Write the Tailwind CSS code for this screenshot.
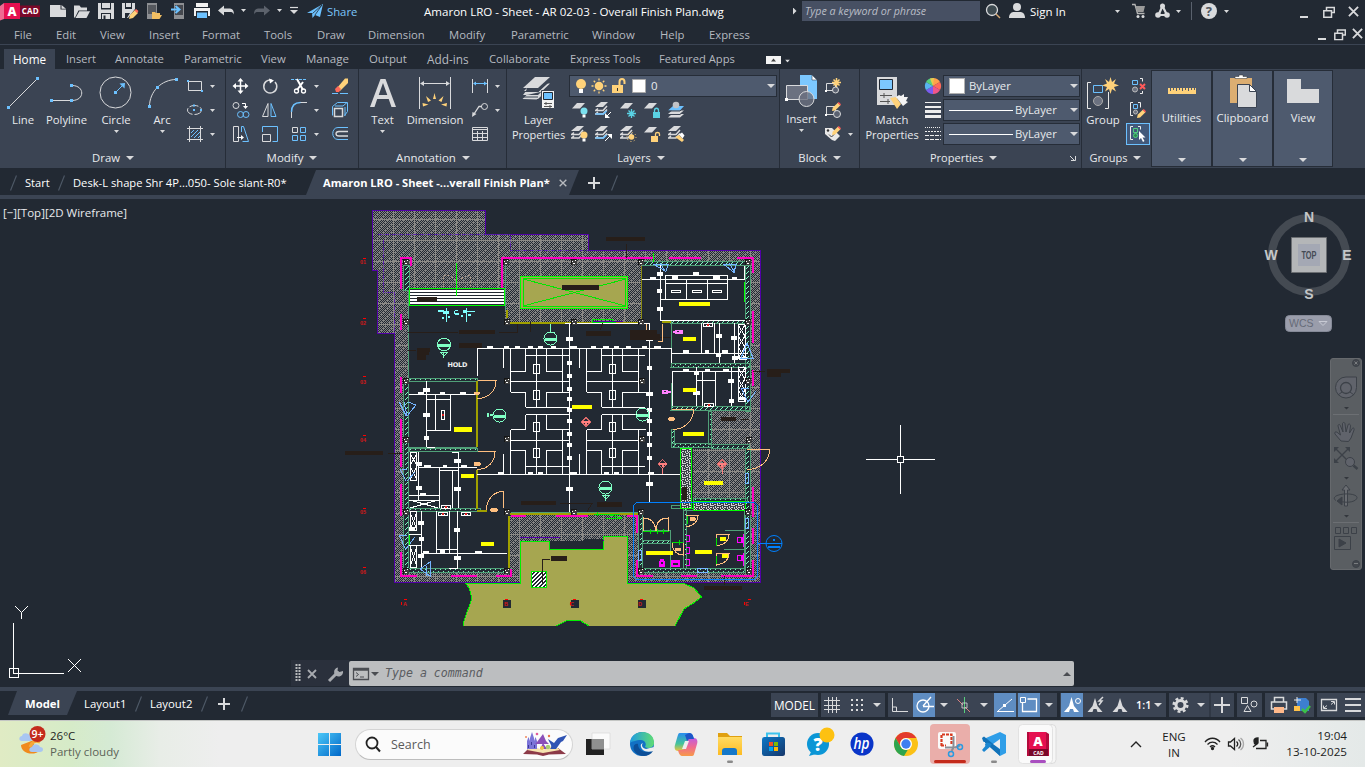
<!DOCTYPE html>
<html lang="en">
<head>
<meta charset="utf-8">
<title>Amaron LRO - Sheet - AR 02-03 - Overall Finish Plan.dwg</title>
<script src="https://cdn.jsdelivr.net/npm/@tailwindcss/browser@4"></script>
</head>
<body class="w-[1365px] h-[767px] overflow-hidden bg-[#222933] font-['Open_Sans','Noto_Sans',sans-serif] text-[11.3px] leading-4 text-[#e8eaed] flex flex-col whitespace-nowrap">

<!-- shared symbols -->
<svg class="absolute w-0 h-0" aria-hidden="true">
  <defs>
    <symbol id="c8" viewBox="0 0 8 4"><path d="M0 0h8L4 4z" fill="#d9dadc"/></symbol>
    <symbol id="c5" viewBox="0 0 5 3"><path d="M0 0h5L2.5 3z" fill="#d9dadc"/></symbol>
    <symbol id="sheet" viewBox="0 0 13 6"><path d="M5 0h8L8 5.500H0z" fill="#d9dadc"/></symbol>
    <symbol id="sheets" viewBox="0 0 16 14"><path d="M6 0h7L8 5H0z" fill="#d9dadc"/><path d="M3 6.500l-2.500 2H8l4-4.500M3 10l-2.500 2H8l4-4.500" fill="none" stroke="#d9dadc" stroke-width="1.500"/></symbol>
    <symbol id="pen" viewBox="0 0 8 8"><path d="M0 8l.6-2.800L5.200.6l2.300 2.300-4.700 4.600z" fill="#ffd27a"/><path d="M5 .8L6 0l2 2-.8 1z" fill="#ff5a5a"/></symbol>
    <symbol id="rest" viewBox="0 0 12 12"><path d="M3.500 4V1.500h7.800v5H9M.8 4.700h7.700v6.500H.8z" fill="none" stroke="#d9dadc" stroke-width="1.500"/></symbol>
    <symbol id="xx" viewBox="0 0 12 12"><path d="M1 1l10 10M11 1L1 11" stroke="#d9dadc" stroke-width="2"/></symbol>
    <symbol id="plus" viewBox="0 0 12 12"><path d="M6 0v12M0 6h12" stroke="#d9dadc" stroke-width="2"/></symbol>
    <symbol id="slash" viewBox="0 0 7 16"><path d="M.5 15.500L6.500.5" stroke="#4e5866" stroke-width="1.200"/></symbol>
  </defs>
</svg>

<!-- title bar -->
<header class="h-[22px] flex items-start shrink-0">
  <div class="w-[424px] flex">
    <svg class="w-[46px] h-[22px]" viewBox="0 0 46 22"><path d="M0 6l4-3v16l-4 1.500z" fill="#ee6a92"/><path d="M4 3h16v16H4z" fill="#e51050"/><path d="M20 5.500h20v11.500H20z" fill="#7a0829"/><text x="7.500" y="15.500" font-family="Open Sans" font-weight="800" font-size="12.500" fill="#fff">A</text><text x="21.800" y="14.300" font-family="Open Sans" font-weight="700" font-size="8" letter-spacing=".2" fill="#fff">CAD</text></svg>
    <svg class="w-6 h-[22px]" viewBox="46 0 24 22"><path d="M50 5h10.500v4.500H66V17H50z" fill="#d9dadc"/><path d="M61.500 5l4.500 3.700h-4.500z" fill="#d9dadc"/></svg>
    <svg class="w-6 h-[22px]" viewBox="70 0 24 22"><path d="M74 17.500V5.500h5.500l1.500 2h6v3h-8.500l-3.500 7z" fill="#d9dadc"/><path d="M79.300 11.300H90L86.500 18H75.500z" fill="#d9dadc"/></svg>
    <svg class="w-6 h-[22px]" viewBox="94 0 24 22"><path d="M98 3h16v16H98z" fill="#d9dadc"/><path d="M101 3h10v6.500h-10zM101 13h10v6h-10z" fill="#222933"/><path d="M102 3h8v5h-8zM102 14h8v5h-8z" fill="#d9dadc"/><path d="M103.500 15.500h2V19h-2z" fill="#222933"/></svg>
    <svg class="w-6 h-[22px]" viewBox="118 0 24 22"><path d="M122 3h13v6l-7 9h-6z" fill="#d9dadc"/><path d="M125 3h7v6h-7zM125 13h5l-3 5h-2z" fill="#222933"/><path d="M126 3h5v4h-5z" fill="#d9dadc"/><path d="M129 19l1-4 5-5 3 3-5 5z" fill="#ffd27a"/><path d="M134.500 10.500l1.500-1.500 2.500 2-1.500 2z" fill="#ff6a5a"/></svg>
    <svg class="w-6 h-[22px]" viewBox="142 0 24 22"><path d="M147 3h10v16h-10z" fill="#8d8f93"/><path d="M148 5h8v9h-8z" fill="#55585e"/><path d="M152 19v-7h3l1 1h4v2h2l-2.500 4z" fill="#f2bf63"/></svg>
    <svg class="w-6 h-[22px]" viewBox="166 0 24 22"><path d="M174 3h10v16h-10z" fill="#8d8f93"/><path d="M175 5h8v10h-8z" fill="#45484f"/><path d="M171 9.500h7M175.500 6l4 3.500-4 3.500" fill="none" stroke="#6cc1ff" stroke-width="2"/></svg>
    <svg class="w-6 h-[22px]" viewBox="190 0 24 22"><path d="M196 3h12v4h-12zM194 8h16v8h-16z" fill="#f2f2f2"/><path d="M196 11h12v8h-12z" fill="#222933"/><path d="M197 12.500h10V18h-10z" fill="#6cc1ff"/></svg>
    <svg class="w-6 h-[22px]" viewBox="214 0 24 22"><path d="M218 10.500l6-5v3h6c2.500 0 4 2 4 6-1-2-2-2.500-4-2.500h-6v3.500z" fill="#d9dadc"/></svg>
    <svg class="w-3 h-[22px]" viewBox="238 0 12 22"><use href="#c5" x="241" y="9" width="5" height="3"/></svg>
    <svg class="w-6 h-[22px]" viewBox="250 0 24 22"><path d="M270 10.500l-6-5v3h-6c-2.500 0-4 2-4 6 1-2 2-2.500 4-2.500h6v3.500z" fill="#5c626c"/></svg>
    <svg class="w-3 h-[22px]" viewBox="274 0 12 22"><use href="#c5" x="277" y="9" width="5" height="3"/></svg>
    <svg class="w-[18px] h-[22px]" viewBox="286 0 18 22"><path d="M290 7.500h8" stroke="#d9dadc" stroke-width="1.200"/><use href="#c8" x="290" y="10" width="8" height="4"/></svg>
    <svg class="w-[23px] h-[22px]" viewBox="304 0 23 22"><path d="M307 13L323 4l-3 13-5-2-2.500 3-.5-5z" fill="#6cc1ff"/><path d="M312.500 13.500L322 5l-7 10" fill="none" stroke="#222933" stroke-width=".8"/></svg>
    <span class="text-[#7cc6fb] text-[11.300px] leading-[23px]">Share</span>
  </div>
  <div class="w-[369px] leading-[24px] text-[11.550px] text-white">Amaron LRO - Sheet - AR 02-03 - Overall Finish Plan.dwg</div>
  <svg class="w-[9px] h-[22px]" viewBox="793 0 9 22"><path d="M792.500 7l4 4-4 4z" fill="#d9dadc"/></svg>
  <div class="w-[178px] h-5 mt-px bg-[#475063] pl-[3px] leading-[21px] text-[10.700px] italic text-[#b9bdc6]">Type a keyword or phrase</div>
  <svg class="w-[50px] h-[22px]" viewBox="980 0 50 22"><circle cx="992" cy="10" r="5.500" fill="#3e4a50" stroke="#d9dadc" stroke-width="1.300"/><path d="M996 14l4 4" stroke="#d6a873" stroke-width="1.500"/><circle cx="1017" cy="7" r="4" fill="#d9dadc"/><path d="M1009 18c0-5 3-6 5-6h6c3 0 5 2 5 6z" fill="#d9dadc"/></svg>
  <span class="w-[80px] leading-[24px] text-[11.500px] text-white">Sign In</span>
  <svg class="w-[180px] h-[22px]" viewBox="1110 0 180 22"><use href="#c5" x="1115" y="10" width="5" height="3"/><path d="M1132 4.500h3l2.500 9h7" fill="none" stroke="#b5b5b5" stroke-width="1.300"/><path d="M1135.500 6h9.500l-1.500 6h-6.500z" fill="#9a9a9a"/><circle cx="1138" cy="16.500" r="1.500" fill="#d9dadc"/><circle cx="1143" cy="16.500" r="1.500" fill="#d9dadc"/><path d="M1162.500 6l-4 9h8.500z" fill="none" stroke="#d9dadc" stroke-width="2.200"/><circle cx="1162.500" cy="6" r="2.500" fill="#d9dadc"/><circle cx="1158" cy="15" r="2.800" fill="#d9dadc"/><circle cx="1167" cy="15" r="2.800" fill="#d9dadc"/><use href="#c5" x="1176" y="10" width="5" height="3"/><path d="M1191.500 2v18" stroke="#59616d"/><circle cx="1209" cy="11" r="8" fill="#d9dadc"/><text x="1205.800" y="16" font-family="Open Sans" font-weight="700" font-size="13" fill="#50565e">?</text><use href="#c5" x="1224" y="10" width="5" height="3"/></svg>
  <svg class="w-[75px] h-[22px]" viewBox="1290 0 75 22"><path d="M1300 17h8" stroke="#d9dadc" stroke-width="2"/><use href="#rest" x="1323" y="6" width="12" height="12"/><use href="#xx" x="1348" y="6" width="11" height="11"/></svg>
</header>

<!-- menu bar -->
<nav class="h-[23px] flex shrink-0 border-b border-[#3b4453] leading-[25px] text-[#b6bac0] pl-[14px]">
  <span class="w-[42px]">File</span><span class="w-[44px]">Edit</span><span class="w-[49px]">View</span><span class="w-[53px]">Insert</span><span class="w-[62px]">Format</span><span class="w-[53px]">Tools</span><span class="w-[51px]">Draw</span><span class="w-[81px]">Dimension</span><span class="w-[62px]">Modify</span><span class="w-[81px]">Parametric</span><span class="w-[68px]">Window</span><span class="w-[49px]">Help</span><span>Express</span>
  <svg class="w-[55px] h-[22px] ml-auto" viewBox="1310 22 55 22"><path d="M1318 39h8" stroke="#d9dadc" stroke-width="2"/><use href="#rest" x="1334" y="28.500" width="12" height="12"/><use href="#xx" x="1352" y="28" width="11" height="11"/></svg>
</nav>

<!-- ribbon tabs -->
<nav class="h-6 flex shrink-0 pt-1 pl-1 leading-5 text-[#b6bac0]">
  <span class="w-[51px] h-5 bg-[#3b4453] text-white text-center text-[11.700px] mr-[11px]">Home</span><span class="w-[49px] text-[11.100px]">Insert</span><span class="w-[69px] text-[11.400px]">Annotate</span><span class="w-[77px]">Parametric</span><span class="w-[45px]">View</span><span class="w-[63px] text-[11.500px]">Manage</span><span class="w-[58px] text-[11.400px]">Output</span><span class="w-[62px] text-[11.800px]">Add-ins</span><span class="w-[81px]">Collaborate</span><span class="w-[89px] text-[11.100px]">Express Tools</span><span class="w-[107px] text-[11.200px]">Featured Apps</span>
  <svg class="w-[26px] h-5" viewBox="766 49 26 20"><path d="M766 56h15v8h-15z" fill="#f4f4f4"/><path d="M771 61.500h5l-2.500-3z" fill="#444"/><use href="#c5" x="785" y="59.500" width="5" height="3"/></svg>
</nav>

<!-- ribbon -->
<section class="h-[99px] flex shrink-0 bg-[#3b4453] pl-px">
  <!-- Draw -->
  <div class="w-[225px] border-r border-[#262d38] flex flex-col">
    <div class="flex h-[79px]">
      <div class="w-11 flex flex-col items-center"><svg class="w-11 h-[43px] shrink-0" viewBox="1 69 44 43"><path d="M8.500 107.500L37.500 78.500" stroke="#d9dadc"/><path d="M7 106h3v3H7zM36 77h3v3h-3z" fill="#6cc1ff"/></svg><span>Line</span></div>
      <div class="w-[43px] flex flex-col items-center"><svg class="w-[43px] h-[43px] shrink-0" viewBox="45 69 43 43"><path d="M52 100.500h20c13 0 13-15 0-15" fill="none" stroke="#d9dadc"/><path d="M50 99h3v3h-3zM70 99h3v3h-3zM70 84h3v3h-3z" fill="#6cc1ff"/></svg><span>Polyline</span></div>
      <div class="w-14 flex flex-col items-center"><svg class="w-14 h-[43px] shrink-0" viewBox="88 69 56 43"><circle cx="115.500" cy="92.500" r="15.500" fill="none" stroke="#d9dadc"/><path d="M115.500 92.500l8-8" stroke="#6cc1ff"/><path d="M114 91h3v3h-3zM119.500 83.500l5.500-.5-.5 5.500z" fill="#6cc1ff"/></svg><span>Circle</span><svg class="w-[5px] h-[3px] mt-[2px]"><use href="#c5"/></svg></div>
      <div class="w-9 flex flex-col items-center"><svg class="w-9 h-[43px] shrink-0" viewBox="144 69 36 43"><path d="M149.500 106.500c0-15 12-27 27-27" fill="none" stroke="#d9dadc"/><path d="M148 105h3v3h-3zM156 86h3v3h-3zM175 78h3v3h-3z" fill="#6cc1ff"/></svg><span>Arc</span><svg class="w-[5px] h-[3px] mt-[2px]"><use href="#c5"/></svg></div>
      <div class="w-11 flex flex-col pt-[5px]">
        <svg class="h-6 w-11" viewBox="180 74 44 24"><path d="M188.500 81.500h13v9h-13z" fill="none" stroke="#d9dadc"/><path d="M187 80h2v2h-2zM201 90h2v2h-2z" fill="#6cc1ff"/><use href="#c5" x="210" y="85" width="5" height="3"/></svg>
        <svg class="h-6 w-11" viewBox="180 98 44 24"><ellipse cx="194.500" cy="110" rx="7" ry="4.500" fill="none" stroke="#d9dadc" stroke-dasharray="9 2"/><path d="M193 109h2v2h-2zM193 104.500h2v2h-2zM200 109h2v2h-2z" fill="#6cc1ff"/><use href="#c5" x="210" y="109" width="5" height="3"/></svg>
        <svg class="h-6 w-11" viewBox="180 122 44 24"><path d="M189.500 126v16M200.500 126v16M187 128.500h16M187 139.500h16" stroke="#d9dadc"/><path d="M191 133l3-3M191 137l7-7M194 138l6-6M198 138l2-2" stroke="#6cc1ff"/><use href="#c5" x="210" y="133" width="5" height="3"/></svg>
      </div>
    </div>
    <div class="flex justify-center items-center gap-[6px] h-5">Draw<svg class="w-2 h-1"><use href="#c8"/></svg></div>
  </div>
  <!-- Modify -->
  <div class="w-[133px] border-r border-[#262d38] flex flex-col">
    <div class="grid grid-cols-[30px_29px_37px_36px] auto-rows-[24px] h-[79px] pt-[5px]">
      <svg viewBox="226 74 30 24"><path d="M240.500 80v12M234 86h13" stroke="#fff" stroke-width="1.500"/><path d="M240.500 78l3 3.500h-6zM240.500 94l3-3.500h-6zM232.500 86l3.500-3v6zM248.500 86l-3.500-3v6z" fill="#fff"/></svg>
      <svg viewBox="256 74 29 24"><path d="M272 80.200a6.500 6.500 0 1 0 3 1.800" fill="none" stroke="#d9dadc" stroke-width="1.500"/><path d="M269 78.500l5 2-4 3z" fill="#fff"/></svg>
      <svg viewBox="285 74 37 24"><path d="M291 79.500h16" stroke="#6cc1ff" stroke-dasharray="3 1"/><path d="M297 79l6 11M303 82l-6 8" stroke="#fff" stroke-width="2"/><circle cx="296.500" cy="91" r="2" fill="none" stroke="#fff" stroke-width="1.300"/><circle cx="303.500" cy="91" r="2" fill="none" stroke="#fff" stroke-width="1.300"/><use href="#c5" x="314" y="85" width="5" height="3"/></svg>
      <svg viewBox="322 74 36 24"><path d="M337 88l8-9.500h3v4.500l-8 8z" fill="#ffd27a"/><path d="M335 89l3-3 3 3-2 3h-3z" fill="#ff6a5a"/><path d="M332 93.500h6M340 93.500h8" stroke="#6cc1ff"/></svg>
      <svg viewBox="226 98 30 24"><circle cx="236" cy="105.500" r="3" fill="none" stroke="#d9dadc"/><path d="M242 103.500h3.500v3" fill="none" stroke="#fff"/><path d="M243 106h5l-2.500 3z" fill="#fff"/><circle cx="240.500" cy="114.500" r="3" fill="none" stroke="#6cc1ff"/><circle cx="246" cy="114.500" r="3" fill="none" stroke="#6cc1ff"/></svg>
      <svg viewBox="256 98 29 24"><path d="M262.500 116.500h5.500v-13z" fill="none" stroke="#d9dadc"/><path d="M276 116.500h-5v-13z" fill="none" stroke="#6cc1ff"/></svg>
      <svg viewBox="285 98 37 24"><path d="M291.500 118v-6M300 102.500h7" stroke="#d9dadc" fill="none"/><path d="M291.500 112c0-6 3-9.500 9-9.500" stroke="#6cc1ff" fill="none" stroke-width="1.500"/><use href="#c5" x="314" y="109" width="5" height="3"/></svg>
      <svg viewBox="322 98 36 24"><path d="M334.500 108.500h8v8h-8z" fill="none" stroke="#d9dadc" stroke-width="1.500"/><path d="M332.500 106.500l5-4h10v9l-3 4M332.500 106.500v9M335 106h8l4-3.500M345 107v9" fill="none" stroke="#6cc1ff"/></svg>
      <svg viewBox="226 122 30 24"><path d="M233.500 126.500h5v15h-5z" fill="none" stroke="#d9dadc"/><path d="M237 137.500h5" stroke="#fff"/><path d="M241 135l3 2.500-3 2.500z" fill="#fff"/><path d="M241.500 132v-5.500h2l5 15h-6" fill="none" stroke="#6cc1ff"/></svg>
      <svg viewBox="256 122 29 24"><path d="M262.500 134.500h8v7h-8z" fill="none" stroke="#d9dadc"/><path d="M262.500 132v-5.500h15v15h-5" fill="none" stroke="#6cc1ff"/></svg>
      <svg viewBox="285 122 37 24"><path d="M292.500 127.500h5v5h-5z" fill="none" stroke="#d9dadc"/><path d="M300.500 127.500h5v5h-5zM292.500 135.500h5v5h-5zM300.500 135.500h5v5h-5z" fill="none" stroke="#6cc1ff"/><use href="#c5" x="314" y="133" width="5" height="3"/></svg>
      <svg viewBox="322 122 36 24"><path d="M348 127.500h-10c-7 0-7 12 0 12h10" fill="none" stroke="#6cc1ff"/><path d="M348 131.500h-9c-4 0-4 4.500 0 4.500h9" fill="none" stroke="#d9dadc" stroke-width="1.300"/></svg>
    </div>
    <div class="flex justify-center items-center gap-[6px] h-5 text-[11.500px]">Modify<svg class="w-2 h-1"><use href="#c8"/></svg></div>
  </div>
  <!-- Annotation -->
  <div class="w-[148px] border-r border-[#262d38] flex flex-col">
    <div class="flex h-[79px]">
      <div class="w-[47px] flex flex-col items-center"><svg class="w-[47px] h-[43px] shrink-0" viewBox="359 69 47 43"><path d="M370 107l10.500-28h5L396 107h-4.500l-2.800-8h-11.500l-2.700 8zM378.700 95h8.600l-4.300-12z" fill="#d9dadc" fill-rule="evenodd"/></svg><span>Text</span><svg class="w-[5px] h-[3px] mt-[2px]"><use href="#c5"/></svg></div>
      <div class="w-[58px] flex flex-col items-center"><svg class="w-[58px] h-[43px] shrink-0" viewBox="406 69 58 43"><path d="M419.500 77v32M450.500 77v32M421 83.500h28" stroke="#d9dadc"/><path d="M420 83.500l4-2.500v5zM450 83.500l-4-2.500v5z" fill="#d9dadc"/><path d="M422.500 103l6 1.500-5.500 2zM426 96l5 4.500-3 1.500zM434.500 93l1.500 6h-3zM443.500 96l-5 4.500 3 1.500zM447 103l-6 1.500 5.500 2z" fill="#ffd27a"/></svg><span>Dimension</span></div>
      <div class="w-[42px] flex flex-col pt-[5px]">
        <svg class="h-6 w-[42px]" viewBox="464 74 42 24"><path d="M472.500 79v14M487.500 79v14" stroke="#d9dadc"/><path d="M474 83.500h13" stroke="#6cc1ff"/><path d="M473 83.500l3-2v4zM487 83.500l-3-2v4z" fill="#6cc1ff"/><use href="#c5" x="495" y="85" width="5" height="3"/></svg>
        <svg class="h-6 w-[42px]" viewBox="464 98 42 24"><path d="M474 114l5-7.500h3" fill="none" stroke="#d9dadc" stroke-width="1.300"/><circle cx="484.500" cy="106.500" r="3" fill="none" stroke="#d9dadc"/><path d="M472 117l.5-5 4 2z" fill="#d9dadc"/><use href="#c5" x="495" y="109" width="5" height="3"/></svg>
        <svg class="h-6 w-[42px]" viewBox="464 122 42 24"><path d="M472.500 127.500h15v13h-15zM472.500 129.500h15M472.500 133.500h15M472.500 137.500h15M477.500 131v9M482.500 131v9" fill="none" stroke="#d9dadc"/></svg>
      </div>
    </div>
    <div class="flex justify-center items-center gap-[6px] h-5 pl-px text-[11.500px]">Annotation<svg class="w-2 h-1"><use href="#c8"/></svg></div>
  </div>
  <!-- Layers -->
  <div class="w-[273px] border-r border-[#262d38] flex flex-col">
    <div class="flex h-[79px]">
      <div class="w-[62px] flex flex-col items-center leading-[15px] pl-px"><svg class="w-[62px] h-[43px] shrink-0" viewBox="507 69 62 43"><path d="M534 77h15l-12 11h-15z" fill="#d9dadc"/><path d="M526 88l-4 4h15l9-8.500h3l-12 11.500h-15l3-4M526 95l-4 4h15l9-8.500M526 94.500l-4.500 4.500 15 .5" fill="#d9dadc"/><path d="M522 91.500h15l12-11M522 97h15" fill="none" stroke="#3b4453" stroke-width="1.200"/><path d="M540.500 90.500h13v18h-13z" fill="#f2f2f2" stroke="#3b4453"/><path d="M542.500 92.500h9v7h-9z" fill="#6cc1ff" stroke="#222933"/><path d="M543 103.500h8M543 106.500h8M545 102v3M549 105v3" stroke="#555"/></svg><span>Layer</span><span class="text-[11px]">Properties</span></div>
      <div class="flex flex-col pt-[6px]">
        <div class="w-[208px] h-[22px] border border-[#262d38] bg-[#4e5a6e] flex items-center">
          <svg class="w-[80px] h-5" viewBox="570 76 80 20"><circle cx="581" cy="84" r="5" fill="#ffd27a"/><path d="M579 89h4v4h-4z" fill="#fff"/><circle cx="599" cy="86" r="4.300" fill="#ffd27a"/><path d="M599 78.500v2M599 91.500v2M591.500 86h2M604.500 86h2M593.700 80.700l1.500 1.500M602.800 89.800l1.500 1.500M604.300 80.700l-1.500 1.500M595.200 89.800l-1.500 1.500" stroke="#ffd27a" stroke-width="1.300"/><path d="M612 85h11v8h-11z" fill="#ffd27a"/><path d="M619.500 85v-3c0-4 5-4 5 0v2" fill="none" stroke="#ffd27a" stroke-width="2"/><path d="M617 88h1v3h-1z" fill="#333"/><path d="M632.500 79.500h13v13h-13z" fill="#fff" stroke="#aaa"/></svg>
          <span class="text-[11.500px] pl-px">0</span><svg class="w-2 h-1 ml-auto mr-px"><use href="#c8"/></svg>
        </div>
        <div class="grid grid-cols-[24px_24px_24px_24px_24px] auto-rows-[24px] pt-px">
          <svg viewBox="570 98 24 24"><use href="#sheet" x="573" y="103" width="13" height="6"/><circle cx="585" cy="111" r="3.500" fill="#7be0ee"/><path d="M583.500 114.500h3v3h-3z" fill="#fff"/></svg>
          <svg viewBox="594 98 24 24"><use href="#sheets" x="596" y="102" width="16" height="14"/><path d="M596.500 114h8l3-3" fill="none" stroke="#6cc1ff" stroke-width="1.500"/><path d="M612 112l-4 4" stroke="#fff"/><path d="M606 118v-5l5 5z" fill="#fff"/></svg>
          <svg viewBox="618 98 24 24"><use href="#sheet" x="621" y="103" width="13" height="6"/><path d="M632.500 109v9M628 113.500h9M629.500 110.500l6 6M635.500 110.500l-6 6" stroke="#5ad2e4" stroke-width="1.300"/></svg>
          <svg viewBox="642 98 24 24"><use href="#sheet" x="645" y="103" width="13" height="6"/><path d="M654 112h7v6h-7z" fill="#5ad2e4"/><path d="M655.500 112v-1.500c0-3 4-3 4 0v1.500" fill="none" stroke="#5ad2e4" stroke-width="1.300"/></svg>
          <svg viewBox="666 98 24 24"><path d="M669 117.500l4-3.500h12l-4 3.500z" fill="#d9dadc"/><path d="M669 114l4-3.500h12l-4 3.500z" fill="#d9dadc"/><path d="M669 110.500l5-4.500h11l-4 4.500z" fill="#6cc1ff"/><path d="M669 114.500h12l4-3.500M669 111h12l4-4" stroke="#3b4453" fill="none"/><circle cx="677" cy="105" r="3.300" fill="#c0c2c6"/></svg>
          <svg viewBox="570 122 24 24"><use href="#sheets" x="572" y="126" width="16" height="14"/><circle cx="585" cy="135" r="3.500" fill="#ffd27a"/><path d="M583.500 138.500h3v3h-3z" fill="#fff"/></svg>
          <svg viewBox="594 122 24 24"><use href="#sheets" x="596" y="126" width="16" height="14"/><path d="M596.500 138h8l3-3" fill="none" stroke="#6cc1ff" stroke-width="1.500"/><path d="M611 136l-5 5" stroke="#fff"/><path d="M613 134v5l-5-5z" fill="#fff"/></svg>
          <svg viewBox="618 122 24 24"><use href="#sheets" x="621" y="126" width="16" height="14"/><circle cx="632.500" cy="137" r="2.800" fill="#ffd27a"/><circle cx="632.500" cy="137" r="4.500" fill="none" stroke="#ffd27a" stroke-dasharray="1 2.500"/></svg>
          <svg viewBox="642 122 24 24"><use href="#sheet" x="645" y="127" width="13" height="6"/><path d="M652 136h7v6h-7z" fill="#ffd27a"/><path d="M656.500 136v-2c0-2 4-2 4 0v2" fill="none" stroke="#ffd27a" stroke-width="1.300"/></svg>
          <svg viewBox="666 122 24 24"><use href="#sheets" x="669" y="126" width="16" height="14"/><path d="M676 137l4-2 5 5-2 2z" fill="#ffd27a"/><path d="M680 134.500l3-2 2.500 3-2 3z" fill="#fff"/></svg>
        </div>
      </div>
    </div>
    <div class="flex justify-center items-center gap-[6px] h-5 pr-1 text-[11px]">Layers<svg class="w-2 h-1"><use href="#c8"/></svg></div>
  </div>
  <!-- Block -->
  <div class="w-[80px] border-r border-[#262d38] flex flex-col">
    <div class="flex h-[79px]">
      <div class="w-[43px] flex flex-col items-center"><svg class="w-[43px] h-[42px] shrink-0" viewBox="780 69 43 42"><path d="M800 75h12l5 5v19h-17z" fill="#7cc8ff"/><path d="M812 75v5h5z" fill="#fff" stroke="#3b4453" stroke-width=".6"/><path d="M786.500 85.500h21v14h-21z" fill="#6b7180" stroke="#d9dadc"/><circle cx="806.500" cy="99" r="7.500" fill="#6b7180" fill-opacity=".8" stroke="#d9dadc"/><path d="M785 98h3v3h-3z" fill="#fff"/></svg><span>Insert</span><svg class="w-[5px] h-[3px] mt-[2px]"><use href="#c5"/></svg></div>
      <div class="w-9 flex flex-col pt-[5px]">
        <svg class="h-6 w-9" viewBox="823 74 36 24"><path d="M826.500 83.500h9v7h-9z" fill="none" stroke="#d9dadc"/><path d="M825 90h2v2h-2z" fill="#fff"/><circle cx="835.500" cy="90" r="3" fill="#5a6170" stroke="#d9dadc"/><path d="M836.500 78v9M832 82.500h9M833.500 79.500l6 6M839.500 79.500l-6 6" stroke="#ffd27a" stroke-width="1.500"/></svg>
        <svg class="h-6 w-9" viewBox="823 98 36 24"><path d="M826.500 106.500h9v8h-9z" fill="none" stroke="#d9dadc"/><path d="M825 114h2v2h-2z" fill="#fff"/><circle cx="837" cy="114" r="3.500" fill="#5a6170" stroke="#d9dadc"/><use href="#pen" x="832" y="102" width="9" height="9"/></svg>
        <svg class="h-6 w-9" viewBox="823 122 36 24"><path d="M825 128h7l8 8-5 5-3-1-7-6z" fill="#e8e8e8"/><circle cx="828" cy="130.500" r="1.200" fill="#333"/><path d="M829 134.500l2.500 2.500 3-3" stroke="#444" fill="none"/><use href="#pen" x="832" y="126" width="9" height="9"/><use href="#c5" x="848" y="133" width="5" height="3"/></svg>
      </div>
    </div>
    <div class="flex justify-center items-center gap-[6px] h-5">Block<svg class="w-2 h-1"><use href="#c8"/></svg></div>
  </div>
  <!-- Properties -->
  <div class="w-[222px] border-r border-[#262d38] flex flex-col">
    <div class="flex h-[79px]">
      <div class="w-[64px] flex flex-col items-center leading-[15px]"><svg class="w-[64px] h-[43px] shrink-0" viewBox="860 69 64 43"><path d="M877 77h20v28h-20z" fill="#d9dadc"/><path d="M879.500 79.500h13v10h-13z" fill="#7cc8ff" stroke="#222933"/><path d="M880 95.500h12M880 101.500h10M884 93v5M888 99v5" stroke="#555"/><path d="M890 98l6-1 5 7-4 5z" fill="#ffd27a"/><path d="M896 97l3-2 2 1 3-2v3l4 0-2 4 2 1-5 4z" fill="#f4f4f4"/></svg><span>Match</span><span class="text-[11px]">Properties</span></div>
      <div class="w-[19px] flex flex-col pt-[5px]">
        <svg class="w-[18px] h-6" viewBox="923 74 18 24"><path d="M932 86V78a8 8 0 0 1 7 4z" fill="#ffa14a"/><path d="M932 86l7-4a8 8 0 0 1 0 8z" fill="#ff6a5a"/><path d="M932 86l7 4a8 8 0 0 1-7 4z" fill="#f0568a"/><path d="M932 86v8a8 8 0 0 1-7-4z" fill="#7a5cf0"/><path d="M932 86l-7 4a8 8 0 0 1 0-8z" fill="#58b4f0"/><path d="M932 86l-7-4a8 8 0 0 1 7-4z" fill="#58cf7d"/><path d="M932 86l-3-7.500a8 8 0 0 1 4-.5z" fill="#e8c94f"/></svg>
        <svg class="w-[18px] h-6" viewBox="923 98 18 24"><path d="M924 102.500h16" stroke="#eee"/><path d="M924 107h16" stroke="#eee" stroke-width="2"/><path d="M924 111.500h16" stroke="#eee" stroke-width="3"/><path d="M924 116.500h16" stroke="#eee" stroke-width="3"/></svg>
        <svg class="w-[18px] h-6" viewBox="923 122 18 24"><path d="M924 127.500h16" stroke="#eee" stroke-dasharray="1 1"/><path d="M924 131.500h16" stroke="#eee" stroke-dasharray="2 1"/><path d="M924 135.500h16M924 139.500h16" stroke="#eee" stroke-dasharray="4 1"/></svg>
      </div>
      <div class="w-[137px] flex flex-col gap-[2px] pt-[6px]">
        <div class="h-[22px] border border-[#262d38] bg-[#4e5a6e] flex items-center pl-[5px]"><i class="w-4 h-4 bg-white border border-[#b0b0b0] mr-1"></i>ByLayer<svg class="w-2 h-1 ml-auto mr-px"><use href="#c8"/></svg></div>
        <div class="h-[22px] border border-[#262d38] bg-[#4e5a6e] flex items-center pl-[5px]"><i class="w-16 h-px bg-white mr-[2px]"></i>ByLayer<svg class="w-2 h-1 ml-auto mr-px"><use href="#c8"/></svg></div>
        <div class="h-[22px] border border-[#262d38] bg-[#4e5a6e] flex items-center pl-[5px]"><i class="w-16 h-px bg-white mr-[2px]"></i>ByLayer<svg class="w-2 h-1 ml-auto mr-px"><use href="#c8"/></svg></div>
      </div>
    </div>
    <div class="flex items-center gap-[6px] h-5 pl-[70px] text-[11px]">Properties<svg class="w-2 h-1"><use href="#c8"/></svg><svg class="w-[6px] h-[6px] ml-auto mr-[5px]" viewBox="0 0 6 6"><path d="M0 1l4 4M5.500 1v4.500H1" fill="none" stroke="#d9dadc"/></svg></div>
  </div>
  <!-- Groups -->
  <div class="w-[69px] flex flex-col">
    <div class="flex h-[79px]">
      <div class="w-[42px] flex flex-col items-center"><svg class="w-[42px] h-[43px] shrink-0" viewBox="1082 69 42 43"><path d="M1091 82.500h-3.500v26h3.500M1105 108.500h3.500V92" fill="none" stroke="#e8e8e8"/><path d="M1093.500 85.500h9v7h-9z" fill="none" stroke="#6cc1ff"/><circle cx="1098" cy="101" r="4.500" fill="#6b7180" stroke="#aaa"/><path d="M1110.500 77l1.500 5 4-3-2 4.500 5 2-5 1.500 2 4.500-4-2.500-1.500 5-1.500-5-4 2.500 2-4.500-5-1.500 5-2-2-4.500 4 3z" fill="#ffd27a"/></svg><span>Group</span></div>
      <div class="w-[27px] flex flex-col pt-[5px] items-center">
        <svg class="h-6 w-6" viewBox="1124 74 24 24"><path d="M1130.500 80.500h5v4h-5z" fill="none" stroke="#6cc1ff"/><circle cx="1133" cy="89.500" r="2.500" fill="#6b7180" stroke="#bbb"/><path d="M1138 78.500h2.500v3M1140.500 91v2.500H1138" fill="none" stroke="#eee"/><path d="M1138 84l5 5M1143 84l-5 5" stroke="#ff5a5a" stroke-width="2"/></svg>
        <svg class="h-6 w-6" viewBox="1124 98 24 24"><path d="M1131 102.500h-2.500v13h2.500M1136 102.500h2.500v5" fill="none" stroke="#eee"/><path d="M1131.500 104.500h4v4h-4z" fill="none" stroke="#6cc1ff"/><circle cx="1133.500" cy="112" r="2" fill="#6b7180" stroke="#bbb"/><use href="#pen" x="1135" y="109" width="9" height="9"/></svg>
        <svg class="h-[22px] w-6 mt-px border border-[#6cc1ff] bg-[#42597a]" viewBox="1125 124 22 20"><path d="M1131 126.500h-2.500v13h2.500M1136 126.500h2.500v3" fill="none" stroke="#eee"/><path d="M1131.500 128.500h4v4h-4z" fill="none" stroke="#50d080"/><circle cx="1133.500" cy="135.500" r="2" fill="#2b8a50" stroke="#50d080"/><path d="M1137 131v9l2-2 2 4 1.500-1-2-3.500h3z" fill="#fff"/></svg>
      </div>
    </div>
    <div class="flex justify-center items-center gap-[6px] h-5 pr-[2px] text-[11px]">Groups<svg class="w-2 h-1"><use href="#c8"/></svg></div>
  </div>
  <div class="flex pt-px">
    <div class="w-[61px] h-[97px] border border-[#262d38] bg-[#4e5a6e] flex flex-col items-center"><svg class="w-[58px] h-[39px] shrink-0" viewBox="1152 71 58 39"><path d="M1167 88h28v6h-28z" fill="#ffd27a"/><path d="M1169.500 88v3M1172.500 88v2M1175.500 88v3M1178.500 88v2M1181.500 88v3M1184.500 88v2M1187.500 88v3M1190.500 88v2M1193.500 88v2" stroke="#4e5a6e"/></svg><span>Utilities</span><svg class="w-2 h-1 mt-auto mb-[4px]"><use href="#c8"/></svg></div>
    <div class="w-[61px] h-[97px] border border-[#262d38] bg-[#4e5a6e] flex flex-col items-center"><svg class="w-[58px] h-[39px] shrink-0" viewBox="1213 71 58 39"><path d="M1229 78h22v25h-22z" fill="#dcae72"/><path d="M1234 78.500h12v-2h-4v-1.500h-4v1.500h-4z" fill="#fff" stroke="#333" stroke-width=".5"/><path d="M1236.500 84.500h12l7 7v16h-19z" fill="#d9dadc" stroke="#3b4453"/><path d="M1248.500 84.500v7h7z" fill="#fff" stroke="#3b4453"/></svg><span class="text-[11.500px]">Clipboard</span><svg class="w-2 h-1 mt-auto mb-[4px]"><use href="#c8"/></svg></div>
    <div class="w-[60px] h-[97px] border border-[#262d38] bg-[#4e5a6e] flex flex-col items-center"><svg class="w-[58px] h-[39px] shrink-0" viewBox="1274 71 58 39"><path d="M1287 79h14v10h18v14h-32z" fill="#d9dadc"/></svg><span>View</span><svg class="w-2 h-1 mt-auto mb-[4px]"><use href="#c8"/></svg></div>
  </div>
</section>

<!-- document tabs -->
<nav class="h-[27px] flex shrink-0 items-center pl-[10px] pt-[2px] text-white">
  <svg class="w-[7px] h-4 mr-2"><use href="#slash"/></svg><span class="w-[33px] text-[11.100px]">Start</span>
  <svg class="w-[7px] h-4 mr-2"><use href="#slash"/></svg><span class="w-[233px] text-[11.200px]">Desk-L shape Shr 4P...050- Sole slant-R0*</span>
  <div class="w-[273px] h-[25px] bg-[#3b4453] [clip-path:polygon(10px_0,100%_0,263px_100%,0_100%)] flex items-center pl-[17px] font-bold text-[11.100px]"><span class="w-[236px]">Amaron LRO - Sheet -...verall Finish Plan*</span><svg class="w-2 h-2 opacity-80"><use href="#xx" width="8" height="8"/></svg></div>
  <svg class="w-3 h-3 ml-[9px] mr-[11px]"><use href="#plus"/></svg><svg class="w-[7px] h-4"><use href="#slash"/></svg>
</nav>
<div class="h-1 bg-[#3b4453] shrink-0"></div>

<!-- model space -->
<main class="relative h-[488px] shrink-0">
<svg class="block w-[1365px] h-[488px]" viewBox="0 199 1365 488" fill="none" shape-rendering="crispEdges">
  <defs>
    <pattern id="dots" width="8" height="8" patternUnits="userSpaceOnUse"><path d="M0 0h8v8H0z" fill="#222933"/><path d="M0 0h1v1H0zM2 0h1v1H2zM4 0h1v1H4zM6 0h2v1H6zM1 1h1v1H1zM3 1h1v1H3zM5 1h1v1H5zM7 1h1v1H7zM0 2h1v1H0zM2 2h1v1H2zM4 2h2v1H4zM6 2h1v1H6zM1 3h1v1H1zM3 3h1v1H3zM5 3h1v1H5zM7 3h1v1H7zM0 4h1v1H0zM2 4h2v1H2zM4 4h1v1H4zM6 4h1v1H6zM1 5h1v1H1zM3 5h1v1H3zM5 5h1v1H5zM7 5h1v1H7zM0 6h2v1H0zM2 6h1v1H2zM4 6h1v1H4zM6 6h1v1H6zM1 7h1v1H1zM3 7h1v1H3zM5 7h1v1H5zM7 7h1v1H7z" fill="#838383"/></pattern>
    <pattern id="tiles" width="21" height="21" patternUnits="userSpaceOnUse" x="393" y="219"><path d="M0 .5h21M.5 0v21" stroke="#8c8a86"/></pattern>
    <pattern id="wall" width="5" height="5" patternUnits="userSpaceOnUse"><path d="M0 0h5v5H0z" fill="#222933"/><path d="M0 4h1v1H0zM1 3h1v1H1zM2 2h1v1H2zM3 1h1v1H3z" fill="#7fffc4"/></pattern>
    <pattern id="stone" width="7" height="7" patternUnits="userSpaceOnUse"><path d="M0 0h2v1H0zM3 0h1v2H3zM5 1h2v1H5zM1 2h1v2H1zM3 3h2v1H3zM6 3h1v2H6zM0 5h2v1H0zM3 5h1v2H3zM5 6h1v1H5zM2 4h1v1H2zM4 1h1v1H4z" fill="#d4d4d4"/></pattern>
    <pattern id="diag" width="4" height="4" patternUnits="userSpaceOnUse"><path d="M0 0h4v4H0z" fill="#222933"/><path d="M0 3h1v1H0zM1 2h1v1H1zM2 1h1v1H2zM3 0h1v1H3zM1 3h1v1H1zM2 2h1v1H2zM3 1h1v1H3zM0 0h1v1H0z" fill="#fff"/></pattern>
    <g id="col"><path d="M-3-3h6v6h-6z" fill="#3c3c3c"/><path d="M-3-3h6v1h-6zM-3-3h1v6h-1z" fill="#151515"/><path d="M-2-1h1v1h-1zM1-2h1v1H1zM-1 1h2v1h-2z" fill="#fff"/></g>
    <g id="desk" stroke="#fff"><path d="M510.500 348v44M503.500 348v20M525.500 348v23.500h-15M510.500 381.500H569M525.500 407v-14.500h-15M525.500 355.500H569M525.500 407.500H569M546.500 348v23.500h16M546.500 407v-14.500h23M562.500 348v44M536.500 348v59M530 381.500h13"/><path d="M533.500 364.500h6v9h-6zM533.500 390.500h6v9h-6z"/></g>
    <g id="seat"><path d="M.5.5h9v3h-9zM3 2.500h4" stroke="#fff"/><path d="M4 1h2v2H4z" fill="#e02020"/></g>
    <g id="tag"><circle r="6.500" stroke="#7fffc4"/><path d="M-6-1h12v3h-12z" fill="#7fffc4"/></g>
    <g id="sym"><path d="M0-4.500l4.500 4.500L0 4.500-4.500 0z" stroke="#d96a6a"/><path d="M-4-1h8v2h-8zM-1-1h2v4h-2z" fill="#ff7f7f"/></g>
    <path id="paving" d="M372.500 210.500H485.500V234.500H588.500V250.500H760.500V582.500H394.500V333.500H377.500V270.500H372.500Z"/>
    <path id="court" d="M711 411H749V447H711zM693 449H747V500H693z"/>
  </defs>

  <!-- site paving -->
  <use href="#paving" fill="url(#dots)"/><use href="#paving" fill="url(#tiles)" stroke="#5200a8"/>
  <path d="M378 234.500H510v16h78M383 240v52h11v41" stroke="#5b24ac" stroke-dasharray="4 1 1 1"/>
  <!-- building floor -->
  <path d="M409 288H505V322H642V264H749V571H640V513H510V571H409Z" fill="#222933"/>
  <use href="#court" fill="url(#dots)"/><use href="#court" fill="url(#tiles)"/>

  <!-- lawn -->
  <path d="M520.500 541.500H549.500V549.500H603.500V536.500H627.500V583H684L694 588 701.500 597 695 602 684 609 675 626H589L580 620H567L556 626H463L464 621 472 598 469 588 466 583H520.500Z" fill="#a6a650"/>
  <path d="M675 626L684 609 695 602 701.500 597 694 588 684 583.500H627.500V536.500H603.500V549.500H549.500V541.500H520.500V583.500H466L469 588 472 598 464 621 463 626M556 626L567 620.500H580L589 626" stroke="#00f000"/>
  <path d="M520 537h40M584 540h20" stroke="#5200a8"/><path d="M550 541h34v-2h19v10h-53z" fill="#222933"/>
  <path d="M531.500 571.500h15v16h-15z" fill="url(#diag)" stroke="#00f000"/><path d="M550 559.500h-7.500V583" stroke="#271e19"/>

  <!-- planter -->
  <path d="M520.500 276.500H627.500V308.500H520.500Z" fill="#a6a650" stroke="#00ff00"/><path d="M523.500 278.500H625.500V306.500H523.500ZM523 279L626 306M626 279L523 306" stroke="#00e800"/>

  <!-- hatched walls -->
  <g fill="url(#wall)" stroke="#50a078">
    <path d="M403.500 265.500H409V290H403.500zM403.500 382.500h5V571h-5zM403.500 568.500H511v4H403.500zM642.500 261.500H749v4H642.500zM745.500 265.500h5V411h-5zM409 378.500h68v3h-68zM409 448.500h68v3h-68zM409 508.500h71v2.500h-71zM671.500 320.500H749v3h-78zM671.500 363.500H749v4h-78zM671.500 406.500H749v4h-78zM671.500 429.500h3v18h-3zM671.500 443.500h40v4h-40zM708.500 411.500h3v33h-3zM711 444.500h38v4h-38zM745.500 448.500h5V571h-5zM693 498.500h54v3h-54zM638.500 513.500h4V571h-4zM638.500 568.500H749v4H638.500zM683.500 508.500h3V568h-3zM642.500 540.500h28v3h-28z"/>
  </g>
  <path d="M408.500 290V571M505.500 265V310M409 447.500h68M409 568.500h98M671.500 323V363M671.500 383V406M744.500 511V571M511 512.500h128M684 510.500h61M690 508h54M724.500 530.500h20v38M724 549.500h20M670.500 530v38M642.500 530.500h28M671 508.500h13v-3h-13z" stroke="#50a078"/>
  <path d="M510 322.500H641M510 514H638" stroke="#a0a000" stroke-width="2"/>
  <path d="M477 381v66M477 470v39M477 510.500h10M507 310V318M509 516V569M662 322h9" stroke="#a0a000" stroke-width="2"/><path d="M641.500 266V320" stroke="#8a8a10"/>

  <!-- magenta boundary -->
  <path d="M401 289V258H411V266M401 314V330M401 377V393M401 419V467M401 484V516M401 552V576H417M451 576H477M496 576H511V569M502 288V258H653M669 258H701M737 258H753V273M753 311V343M753 370V386M753 487V517M753 528V544M753 560V576H721M697 576H681M653 576H637V560M637 533V516H627M588 516H556M526 516H511" stroke="#ff00c0" stroke-width="2"/>

  <!-- stairs -->
  <path d="M409.500 288.500H504.500V305.500H409.500Z" fill="#222933" stroke="#00ff00"/><path d="M410 291h94M410 294h94M410 297h94M410 300h94M410 303h94" stroke="#fff" stroke-width="2"/>
  <path d="M456.500 263V296" stroke="#00ff00"/><path d="M443.500 287v-12h4l10 6 10-6h3v12" stroke="#a89484" stroke-dasharray="2 2"/>

  <!-- stone strips -->
  <path d="M680.500 448.500H692V508H680.500zM693.500 501.500H746V510H693.500z" fill="#3a3f46"/><path d="M680.500 448.500H691.500V508H680.500zM693.500 501.500H745.500V510H693.500z" fill="url(#stone)" stroke="#00ff00"/>

  <!-- workstations -->
  <path d="M477.500 376V348.500H671.500V363M569.500 323V512M649.500 323V502M477 474.500H680M565 323.500h84" stroke="#fff"/>
  <use href="#desk"/><use href="#desk" transform="translate(76 0)"/>
  <g transform="translate(0 822) scale(1 -1)"><use href="#desk"/><use href="#desk" transform="translate(76 0)"/></g>

  <!-- furniture, left rooms -->
  <g stroke="#fff">
    <path d="M409 394.500h68M426.500 381v66M435.500 394v36M450.500 394v36.500H427M427 399.500h24M427 447.500h8M441.500 410.500h3v9h-3z"/>
    <path d="M418 467.500h59M418.500 452v48M439.500 468v40M452.500 470v38M458.500 452v56M439 470.500h19M409 495.500h30v12M409 500.500h30M410 500l28 8M438 500l-28 8M452 452.500h6"/>
    <path d="M421.500 511v57M409 534.500h12M409 545.500h12M436.500 511v42M449.500 511v42M457.500 511v57M436 549.500h22M421 553.500h86M449 568.500h9"/>
    <path d="M410.500 452.500h6v28h-6zM410 453l7 13-7 14M417 453l-7 13 7 14M410.500 511.500h6v19h-6zM410 512l7 18M417 512l-7 18M410.500 545.500h6v22h-6zM410 546l7 21M417 546l-7 21"/>
  </g>
  <use href="#seat" x="441" y="505"/><use href="#seat" x="438" y="512"/><use href="#seat" x="461" y="512"/><path d="M442 414h2v2h-2z" fill="#e02020"/>

  <!-- furniture, right rooms -->
  <g stroke="#fff">
    <path d="M642 279.500h102v-14M660.500 265v55.500H745M665.500 275.500h62v24h-67M665.500 275v24M686.500 279v20M707.500 279v20M665 283.500h62M671.500 290.500h9v2h-9zM692.500 290.500h9v2h-9zM712.500 290.500h9v2h-9z"/>
    <path d="M701.500 323v30M714.500 323v30M719.500 323v40M672 353.500h76M734.500 323v40"/>
    <path d="M672.500 406v-34.500H745M696.500 367v39M702.500 371v35M715.500 371v35M697 380.500h18M731.500 367v39M650 502h-12"/>
    <path d="M738.500 324.500h7v34h-7zM738 325l7 11-7 11 7 11M745 325l-7 11 7 11-7 11M738.500 367.500h7v34h-7zM738 368l7 11-7 11 7 11M745 368l-7 11 7 11-7 11"/>
  </g>
  <use href="#seat" x="703" y="323"/><use href="#seat" x="704" y="403"/>

  <!-- dimension ticks -->
  <path d="M487 347.500h6M504 347.500h5M515 347.500h5M528 347.500h5M538 347.500h5M551 347.500h5M570 347.500h7M591 347.500h5M603 347.500h6M614 347.500h5M626 347.500h5M642 347.500h5M654 347.500h7M498 473.500h6M528 473.500h5M538 473.500h5M570 473.500h7M604 473.500h5M614 473.500h5M648 473.500h6M418 393.500h6M440 393.500h5M460 393.500h6M424 466.500h7M443 466.500h4M461 466.500h6M420 494.500h6M423 552.500h6M440 551.500h5M475 552.500h7M650 278.500h6M672 277.500h6M713 277.500h7M732 278.500h5M683 351.500h6M705 351.500h4M722 351.500h6M739 358.500h8M683 370.500h6M705 370.500h5M723 370.500h6M739 398.500h7" stroke="#fff" stroke-width="3"/>
  <path d="M566 339h7M567 363h5M567 376h5M567 389h5M567 399h5M567 410h5M567 421h5M567 434h5M567 445h5M567 458h5M566 489h7M646 339h7M647 368h5M646 394h7M647 410h5M647 421h5M647 434h5M647 445h5M647 458h5M646 484h7M423 390h7M423 415h7M424 438h5M417 464h5M454 461h7M416 488h6M454 489h7M418 523h6M419 539h5M418 556h6M409 529h6M454 530h6M454 558h7M657 274h6M693 274h6M657 291h5M657 309h6M716 336h6M731 338h6M716 355h5M732 358h6M694 373h5M728 381h6M693 393h7M729 401h5" stroke="#fff" stroke-width="4"/>

  <!-- room names -->
  <g fill="#ffff00"><path d="M454 427h18v5h-18zM461 474h13v4h-13zM481 542h13v4h-13zM572 405h20v4h-20zM679 302h31v4h-31zM683 337h13v4h-13zM683 388h13v4h-13zM683 432h21v4h-21zM704 481h19v4h-19zM646 551h27v4h-27zM695 550h17v4h-17zM720 537h6v4h-6zM722 554h6v4h-6z"/></g>
  <!-- annotations -->
  <g fill="#271e19"><path d="M606 237h39v4h-39zM417 297h20v5h-20zM459 330h36v4h-36zM459 343h23v5h-23zM417 348h13v4h-1v3h-3v5h-9zM767 369h23v4h-9v4h-14zM345 451h38v4h-38zM562 285h37v5h-37zM586 331h25v5h-25zM630 330h27v4h3v6h-30zM521 501h35v4h-35zM597 502h25v5h-25zM551 556h16v5h-16zM721 417h15v4h-15zM704 586h38v4h-38zM682 487h5v13h-5z"/></g>
  <path d="M408 332.500h50M499 332.500h18v-9M530.500 322v10M408 350.500h8M626.500 244v14M753 371.500h12M388 453.500h14M560 503.500h32l-5 8M724.500 576v9M741 419.500h8M650 337.500h21M600 330l4-9" stroke="#271e19"/>

  <!-- doors -->
  <g stroke="#ffbf80"><path d="M478 380.500h18c0 10-7 18-19 18M478 451.500h17c0 10-7 18-18 18M503.500 508V491.500c-10 0-17 8-17 18M671.500 409.500h22c0 11-9 20-21 20M747 449.500h22.500c0 11-9 20-22.500 20M662.500 324v17h-5M646 324v6M643.500 517v15M668.500 517v15M643 518c7 0 12 4 13 13M668 518c-7 0-12 4-12 13M686 515.500h12c0 6-5 11-12 11M716.500 534v12M716 534.500h13c0 6-5 11-13 11M716.500 554v12M716 553.500h13c0 6-5 11-13 11M683 543v12c-6 0-11-5-11-12"/></g>
  <g fill="#ffbf80"><path d="M474 462h6v1h1v2h-1v1h-6zM474 392h6v2h-1v1h-4zM491 508h6v1h1v2h-1v1h-6v-1h-1v-2h1zM669 417h5v1h1v2h-1v1h-5v-1h-1v-2h1zM690 517h5v1h1v2h-1v1h-5zM675 548h6v3h-6z"/></g>

  <!-- tags -->
  <use href="#tag" x="444" y="344.500"/><path d="M443.500 352v6M440 352h8l-4 4z" stroke="#7fffc4"/>
  <use href="#tag" x="550.500" y="338.500"/><path d="M550.500 324v8M547 332h8" stroke="#7fffc4"/>
  <use href="#tag" x="499.500" y="415.500"/><path d="M487.500 413v4M490 415h3" stroke="#7fffc4" stroke-width="2"/>
  <use href="#tag" x="642.500" y="414.500"/><use href="#tag" x="605.500" y="487.500"/><path d="M605.500 494v7M602 495h8l-4 4z" stroke="#7fffc4"/>
  <use href="#sym" x="586" y="422"/><use href="#sym" x="662.500" y="464"/><use href="#sym" x="722" y="464"/><path d="M662.500 468v6M722.500 468v6" stroke="#ff7f7f"/>
  <g fill="#7fffff"><path d="M438 310h6v2h-6zM446 308h1v14h-1zM443 311h3v3h-3zM447 311h2v3h-2zM442 317h2v2h-2zM448 316h2v2h-2zM466 308h1v14h-1zM463 310h3v3h-3zM467 311h8v1h-8zM461 315h2v2h-2zM468 314h3v2h-3zM455 310h3v1h-3zM454 311h1v3h-1zM455 313h4v2h-4z"/></g>
  <g fill="#ff80ff"><path d="M675 330h8v4h-8zM673 331h2v2h-2zM662 390h6v4h-6zM668 391h3v2h-3z"/></g><path d="M677 331.500h2M664 391.500h2" stroke="#222933"/>

  <!-- windows -->
  <g stroke="#74b4ff"><path d="M399.500 402.500l7 14M416 405l-9 11M404 402l3 14M416 405l-8-3M400 469l6 12M415 472l-8 9M402 469h5M399.500 535.500l6 14M415 537l-9 12M400 535h7M420 569l10-7v14zM426 566v10M654 264.500h14l-2 7zM724 264.500h12l-2 8zM741 358l6-15 6 15zM741 388l7 14 8-11M742 388h7M745.500 473.500h3v10h-3zM745.500 518.500h3v10h-3zM638.500 550.500h3v10h-3zM697.500 568.500h10v4h-10zM660 263l5 8M729 263l5 8"/></g>
  <path d="M409.500 535v10M653.500 253v9M744.500 282v20" stroke="#00ff00"/><path d="M592 319.500h20l3 3H592zM594 514.500h26M606 518.500h16M610 515l12 3M597 512v4" stroke="#00e800"/><path d="M593 321.500h30" stroke="#5200a8"/>

  <!-- washrooms -->
  <g stroke="#00e000"><path d="M643 531.500h26M650.500 529v5M657.500 529v5M663.500 529v5M672 542.500h11M679.500 540v5M716.500 538v8M716.500 556v8M687.500 516v8"/></g>
  <g stroke="#ff00ff"><path d="M686 535h3v6h-3M686 547h3v6h-3M686 559h3v6h-3M743.500 534v13M743.500 553v13"/><circle cx="740" cy="540" r="3"/><circle cx="740" cy="558" r="3"/></g>
  <g fill="#ff00ff"><path d="M660 559h4v2h1v6h-6v-6h1zM671 560h9v7h-9zM741 538h2v4h-2zM741 556h2v4h-2z"/></g><path d="M661 562h2v2h-2zM673 563h5v2h-5z" fill="#222933"/>

  <!-- revision bubble -->
  <path d="M638 502.500H752a5 5 0 0 1 5.500 5V574a5 5 0 0 1-5.500 5.500H639a5 5 0 0 1-5.500-5.500V507.500a5 5 0 0 1 4.500-5M757 543.500h25" stroke="#0080ff"/><circle cx="774" cy="543.500" r="8" stroke="#0080ff" shape-rendering="auto"/><path d="M768 546h12v2h-12zM773 539h2v2h-2z" fill="#0080ff"/>

  <!-- columns -->
  <use href="#col" x="406" y="262"/><use href="#col" x="506" y="262"/><use href="#col" x="574" y="262"/><use href="#col" x="641" y="262"/><use href="#col" x="748" y="262"/>
  <use href="#col" x="406" y="322"/><use href="#col" x="507" y="322"/><use href="#col" x="574" y="322"/><use href="#col" x="641" y="322"/><use href="#col" x="748" y="322"/>
  <use href="#col" x="406" y="381"/><use href="#col" x="507" y="381"/><use href="#col" x="642" y="381"/><use href="#col" x="748" y="381"/>
  <use href="#col" x="406" y="440"/><use href="#col" x="507" y="439"/><use href="#col" x="642" y="439"/><use href="#col" x="749" y="440"/>
  <use href="#col" x="406" y="512"/><use href="#col" x="507" y="512"/><use href="#col" x="574" y="512"/><use href="#col" x="641" y="512"/><use href="#col" x="748" y="512"/>
  <use href="#col" x="406" y="571"/><use href="#col" x="507" y="571"/><use href="#col" x="641" y="571"/><use href="#col" x="749" y="571"/>
  <path d="M503 600h8v8h-8zM571 600h8v8h-8zM638 600h8v8h-8z" fill="#222933"/>

  <!-- grid references -->
  <g fill="#d01818" font-family="Liberation Sans" font-weight="700" font-size="5.500">
    <text x="360" y="264">01</text><text x="360" y="325">02</text><text x="360" y="384">03</text><text x="360" y="442">04</text><text x="360" y="514">05</text><text x="360" y="574">06</text>
    <text x="403" y="606">A</text><text x="504" y="606">B</text><text x="570" y="606">C</text><text x="638" y="606">D</text><text x="745" y="606">E</text>
  </g>
  <path d="M363 258.500h3M363 318.500h3M363 376.500h3M363 435.500h3M363 508.500h3M363 567.500h3M404 599.500h3M505 599.500h3M573 599.500h3M640 599.500h3M748 599.500h3M401.500 602v3M744.500 602v3M570.500 602v3" stroke="#ff0000"/>
  <text x="447.500" y="367" font-family="DejaVu Sans" font-weight="700" font-size="6.500" textLength="20" fill="#f0f0f0">HOLD</text>

  <!-- crosshair and UCS icon -->
  <path d="M866 459.500h31M904 459.500h31M900.500 425v31M900.500 463v31M897.500 456.500h6v6h-6z" stroke="#fff"/>
  <path d="M13.500 623v50.500H64M9.500 668.500h9v9h-9z" stroke="#fff"/><path d="M15 606l6.500 6.500L28 606M21.500 612.500V619M68 659l13 13M81 659l-13 13" stroke="#fff" shape-rendering="auto"/>
</svg>

<span class="absolute left-[3px] top-[6px] text-[11.500px]">[−][Top][2D Wireframe]</span>

<!-- view cube -->
<svg class="absolute left-[1260px] top-[6px] w-[100px] h-[130px]" viewBox="1260 205 100 130" font-family="Liberation Sans">
  <circle cx="1309" cy="255" r="37" fill="none" stroke="#444a52" stroke-width="8"/>
  <path d="M1291.500 237.500h35v35h-35z" fill="#b4b6b8" stroke="#6b6e72"/><path d="M1298 244h22v22h-22z" fill="#a4a8b4"/>
  <text x="1301.500" y="259" font-size="10" font-weight="700" textLength="15" lengthAdjust="spacingAndGlyphs" fill="#444b55">TOP</text>
  <g font-size="14" font-weight="700" fill="#c4c6c8" text-anchor="middle"><text x="1309" y="222">N</text><text x="1309" y="298.500">S</text><text x="1271" y="260">W</text><text x="1347" y="260">E</text></g>
  <rect x="1285.500" y="315.500" width="46" height="16" rx="4" fill="#9a9dab" stroke="#868a98"/><text x="1289" y="327" font-size="10.500" fill="#666b78">WCS</text><path d="M1319 321.500h8l-4 4z" fill="none" stroke="#c8cad4"/>
</svg>

<!-- navigation bar -->
<aside class="absolute left-[1330px] top-[159px] w-8 h-[212px] rounded-[3px] bg-[#5a5e62] border border-[#66696d]">
<svg class="block w-[30px] h-[210px]" viewBox="1331 359 30 210" fill="none" stroke="#3c4148">
  <circle cx="1356" cy="363" r="3.500" fill="#43474d"/><path d="M1354.500 361.500l3 3M1357.500 361.500l-3 3" stroke="#7a7d80"/>
  <path d="M1346 377h10.500v10.500a10.500 10.500 0 1 1-10.500-10.500z" fill="#60636b"/><circle cx="1346" cy="388" r="5.500" stroke-width="1.300"/><path d="M1338 395l4-3M1354 395l-4-3"/>
  <path d="M1344 407h5l-2.500 2.500zM1344 477h5l-2.500 2.500zM1344 515h5l-2.500 2.500z" fill="#33373d" stroke="none"/>
  <path d="M1333 414.500h26M1333 522.500h26" stroke="#6c6f73"/>
  <path d="M1341 441l-6-7c-1-2 1-3 3-1l2.500 2-2.500-9c0-2 2-2 2.500 0l2.500 6-.5-8c0-2 2.500-2 2.500 0l1 8 2-7c.5-2 2.500-1 2.500 1l-1 7 2.500-4c1-2 2.500-1 2 1l-3 8-2.500 3.500z" fill="#60636b"/>
  <path d="M1335 448l14 14M1349 448l-14 14" stroke-width="1.400"/><path d="M1334 447h5l-5 5zM1350 447h-5l5 5zM1334 463v-5l5 5z" fill="#3c4148" stroke="none"/><circle cx="1350" cy="462" r="4.500" fill="#60636b"/><path d="M1353.500 465.500l4 3.500" stroke-width="2.500"/>
  <path d="M1346 485l4 5h-2.500v16h-3v-16h-2.500z" fill="#6a6d72"/><path d="M1339 501c10 3 18 0 18-3.500s-12-5-20-2c-4 2-3 4-1 5"/><path d="M1342 497v8l-5-4z" fill="#3c4148"/>
  <path d="M1335.500 527.500h5v6h-5zM1343.500 527.500h5v6h-5zM1351.500 527.500h5v6h-5zM1334.500 536.500h16v13h-16z"/><path d="M1339 539v8l7-4z" fill="#3c4148"/>
  <circle cx="1356" cy="564" r="3.500" fill="#43474d"/><path d="M1354 563.500h4" stroke="#7a7d80"/>
</svg>
</aside>

<!-- command line -->
<div class="absolute left-[291px] top-[461px] h-[26px] w-[783px] flex">
  <svg class="w-[58px] h-[26px] bg-[#2a303c]" viewBox="291 660 58 26"><path d="M296.500 664v17M299.500 664v17" stroke="#b8babd" stroke-width="2" stroke-dasharray="2 1"/><path d="M308 670l8 8M316 670l-8 8" stroke="#a8abb0" stroke-width="1.800"/><path d="M329 681l9-9" stroke="#a8abb0" stroke-width="3"/><path d="M343 671a4.500 4.500 0 1 1-5-3.500l-.5 3 2 1.500z" fill="#a8abb0"/></svg>
  <div class="flex-1 h-[25px] mt-px rounded-[2px] bg-[#bcbec0] flex items-center">
    <svg class="w-9 h-[25px]" viewBox="349 661 36 25"><path d="M353.500 668.500h15v11h-15zM353 670h16" fill="none" stroke="#4a4d52" stroke-width="1.300"/><path d="M356 672.500l2.500 2-2.500 2M360 677h4" fill="none" stroke="#4a4d52"/><path d="M371 672h8l-4 4z" fill="#4a4d52"/></svg>
    <span class="font-['DejaVu_Sans_Mono',monospace] italic text-[11.600px] -mt-px text-[#5a5c60]">Type a command</span>
    <svg class="w-2 h-1 ml-auto mr-[3px]" viewBox="0 0 8 4"><path d="M0 4h8L4 0z" fill="#4a4d52"/></svg>
  </div>
</div>
</main>
<div class="h-1 bg-[#3b4453] shrink-0"></div>

<!-- layout tabs and status bar -->
<footer class="h-[29px] shrink-0 flex pl-2 text-white">
  <div class="w-[69px] h-6 bg-[#3b4453] [clip-path:polygon(9px_0,100%_0,59px_100%,0_100%)] pl-[17px] leading-[26px] font-bold">Model</div>
  <div class="flex items-center h-[26px] pl-[7px]">
    <span class="w-[51px] text-[11.400px]">Layout1</span><svg class="w-[7px] h-4 mr-2"><use href="#slash"/></svg><span class="w-[51px] text-[11.400px]">Layout2</span><svg class="w-[7px] h-4 mr-[10px]"><use href="#slash"/></svg><svg class="w-3 h-3 mr-[11px]"><use href="#plus"/></svg><svg class="w-[7px] h-4"><use href="#slash"/></svg>
  </div>
  <div class="flex ml-auto pt-[2px] gap-[3px] [&>*]:h-6 [&>*]:bg-[#3b4453]">
    <span class="w-[47px] leading-6 text-center text-[11.800px]">MODEL</span>
    <svg class="w-16" viewBox="821 693 64 24"><path d="M828.500 697v16M832.500 697v16M836.500 697v16M824 700.500h16M824 705.500h16M824 709.500h16" stroke="#d9dadc"/><path d="M851 700h12M851 705h12M851 710h12" stroke="#d9dadc" stroke-width="2" stroke-dasharray="2 3"/><use href="#c8" x="873" y="703" width="8" height="4"/></svg>
    <svg class="w-[169px]" viewBox="888 693 169 24"><path d="M892.500 698v13.500H908" fill="none" stroke="#d9dadc"/><path d="M892.500 707h4v4" fill="none" stroke="#d9dadc"/><path d="M913 693h22v24h-22z" fill="#5f8dc2"/><circle cx="923" cy="706" r="6" fill="none" stroke="#fff" stroke-width="1.300"/><path d="M923 706.500h11M923 706l8-9" stroke="#fff" stroke-width="1.300"/><use href="#c8" x="940" y="703" width="8" height="4"/><path d="M964.500 697v16" stroke="#58cf7d"/><path d="M957 699l6 6M965 707l5 5" stroke="#d98080"/><path d="M962 703h5v5h-5z" fill="none" stroke="#d9dadc" stroke-width=".8"/><use href="#c8" x="980" y="703" width="8" height="4"/><path d="M994 693h22v24h-22zM1018 693h22v24h-22z" fill="#5f8dc2"/><path d="M997 711.500h17M998 711l14-12" stroke="#fff"/><path d="M1003 704h3v3h-3z" fill="#fff"/><path d="M1022.500 703v8.500h14V699h-9" fill="none" stroke="#fff" stroke-width="1.300"/><path d="M1020.500 697.500h5v5h-5z" fill="none" stroke="#fff"/><use href="#c8" x="1045" y="703" width="8" height="4"/></svg>
    <div class="w-[106px] flex items-center"><svg class="w-[76px] h-6" viewBox="1060 693 76 24"><path d="M1061 693h22v24h-22z" fill="#5f8dc2"/><path d="M1071.500 697l2.500 9 5 6h-5l-1-3h-3l-1 3h-5l5-6z" fill="#fff"/><circle cx="1078" cy="701" r="2.500" fill="none" stroke="#fff"/><path d="M1095 698l2.500 8 5 6h-5l-1-3h-3l-1 3h-5l5-6z" fill="#d9dadc"/><path d="M1103 697l-4 4h3l-3 4" fill="none" stroke="#d9dadc" stroke-width="1.500"/><path d="M1120 698l2.500 8 5 6h-5l-1-3h-3l-1 3h-5l5-6z" fill="#d9dadc"/></svg><span class="text-[10.800px] font-semibold">1:1</span><svg class="w-2 h-1 ml-auto mr-1"><use href="#c8"/></svg></div>
    <svg class="w-[65px]" viewBox="1169 693 65 24"><circle cx="1180.500" cy="705" r="4.500" fill="none" stroke="#d9dadc" stroke-width="3"/><circle cx="1180.500" cy="705" r="6.800" fill="none" stroke="#d9dadc" stroke-width="2.500" stroke-dasharray="2.900 2.440"/><use href="#c8" x="1197" y="703" width="8" height="4"/><path d="M1210 693v24" stroke="#262d38"/><path d="M1222 697v16M1214 705h16" stroke="#d9dadc" stroke-width="2"/></svg>
    <svg class="w-[25px]" viewBox="1237 693 25 24"><path d="M1241.500 697.500h6v6h-6zM1251 711.500h-7l3.500-6z" fill="none" stroke="#d9dadc"/><circle cx="1254" cy="704" r="3" fill="none" stroke="#d9dadc"/></svg>
    <svg class="w-[49px]" viewBox="1265 693 49 24"><path d="M1274.500 702v-4.500h9v4.500M1274 709h-2.500v-7h15v7h-2.500" fill="none" stroke="#d9dadc" stroke-width="1.500"/><path d="M1274 707h10v6h-10z" fill="#ffb88a"/><path d="M1297 698h9l3 3v10h-12z" fill="#3d7fd0"/><path d="M1294 706h6v5h-6z" fill="#ffc24a"/><path d="M1302 709l3 3 5-6" fill="none" stroke="#3cc04a" stroke-width="2.500"/><path d="M1294 700h7M1297 697v6" stroke="#e8e8e8"/></svg>
    <svg class="w-12" viewBox="1316 693 48 24"><path d="M1320.500 699.500h15v11h-15z" fill="none" stroke="#d9dadc" stroke-width="1.300"/><path d="M1326 708.500h-3.500v-3M1330 701.500h3.500v3M1323 708l3-2.500M1333 702l-3 2.500" fill="none" stroke="#d9dadc"/><path d="M1344 699h16M1344 705h16M1344 711h16" stroke="#d9dadc" stroke-width="2"/></svg>
  </div>
</footer>

<!-- windows taskbar -->
<footer class="h-[47px] shrink-0 flex border-t border-[#c4c6c4] text-[#1c1c1c] text-[11.500px] bg-[linear-gradient(90deg,#e0ebc4_0,#d6ebc8_70px,#d5ead4_110px,#e8ede7_160px,#eeeeee_220px,#eeeeee_1230px,#e4e9e8_1365px)]">
  <svg class="w-[50px] h-[46px]" viewBox="0 721 50 46"><path d="M21 745c0 8 12 12 20 5-8-1-8-9-7-10z" fill="#f08a1c"/><path d="M40 742c-5-2-8 0-10 5" stroke="#f6a93b" stroke-width="3" fill="none"/><path d="M22 741c-4 0-3-5 0-5 1-4 7-3 8 0 4 0 4 5 0 5z" fill="#a9c6f2"/><path d="M32 752c-4 0-3-5 0-5 1-4 7-3 8 0 4 0 4 5 0 5z" fill="#a9c6f2"/><circle cx="37.500" cy="734" r="8" fill="#c42b1c"/><text x="37.500" y="738" text-anchor="middle" font-family="Open Sans" font-size="10.500" font-weight="600" fill="#fff">9+</text></svg>
  <div class="w-[261px] pt-[7px] leading-4">26°C<br><span class="text-[#5c6357]">Partly cloudy</span></div>
  <svg class="w-[44px] h-[46px]" viewBox="311 721 44 46"><defs><linearGradient id="wn" x1="0" y1="0" x2="1" y2="1"><stop offset="0" stop-color="#4cc8f8"/><stop offset="1" stop-color="#0067c8"/></linearGradient></defs><path d="M318 733h11v11h-11zM330 733h11v11h-11zM318 745h11v11h-11zM330 745h11v11h-11z" fill="url(#wn)"/></svg>
  <div class="w-[218px] h-[31px] mt-[8px] rounded-full bg-[#fbfbfb] border border-[#d4d4d4] border-b-[#bdbdbd] flex items-center">
    <svg class="w-[35px] h-[29px]" viewBox="356 730 35 29"><circle cx="372" cy="743" r="5.500" fill="none" stroke="#222" stroke-width="1.800"/><path d="M376 747l4 4.500" stroke="#222" stroke-width="2"/></svg>
    <span class="text-[12.500px] text-[#5a5a5a]">Search</span>
    <svg class="w-[46px] h-7 ml-auto mr-[5px]" viewBox="522 730 46 28"><path d="M524 753l6-6 14 4 15-4 8 6-17 .5-6 1.500-6-1.500z" fill="#8c3a48"/><path d="M528 749l5-4 11 4 11-5 6 5-17 3z" fill="#f6e3b0"/><path d="M528 748v-8l1.500-4 1.500 4v-3l2-6 2 6v3l1.500-4 1.500 4v8z" fill="#7b74d8"/><path d="M532 741h1v3h-1zM535 744h1v3h-1zM529 744h1v3h-1z" fill="#3c3a9a"/><path d="M538 741l6-8 3 7 3 3h-14zM541 748l3-6 4 6z" fill="#8a4fb8"/><path d="M549 738l6 4 4-5 9-3-4 6-2 1-5 7h-6c3-3 0-5-2-10z" fill="#3054b4"/><circle cx="543" cy="747" r="2" fill="#f0c64a"/><circle cx="549" cy="746" r="2.200" fill="#a8d070"/><circle cx="527" cy="736" r="1" fill="#f08a5c"/><circle cx="550" cy="735" r="1.200" fill="#e8734a"/><circle cx="538" cy="733" r="1.300" fill="#e05a9a"/></svg>
  </div>
  <svg class="w-[557px] h-[46px]" viewBox="573 721 557 46">
    <defs>
      <linearGradient id="eg" x1="0" y1="0" x2="1" y2="0"><stop offset="0" stop-color="#1f9be0"/><stop offset="1" stop-color="#5fdc74"/></linearGradient>
      <linearGradient id="fd" x1="0" y1="0" x2="0" y2="1"><stop offset="0" stop-color="#ffdb62"/><stop offset="1" stop-color="#fdbb22"/></linearGradient>
      <linearGradient id="st" x1="0" y1="0" x2="1" y2="1"><stop offset="0" stop-color="#0b78c8"/><stop offset="1" stop-color="#16366a"/></linearGradient>
      <linearGradient id="cl" x1="0" y1="0" x2="0" y2="1"><stop offset="0" stop-color="#2a8df0"/><stop offset=".6" stop-color="#45c49a"/><stop offset="1" stop-color="#f0c23c"/></linearGradient>
      <linearGradient id="cr" x1="0" y1="0" x2="0" y2="1"><stop offset="0" stop-color="#c05ce0"/><stop offset=".5" stop-color="#f06a90"/><stop offset="1" stop-color="#f79a48"/></linearGradient>
    </defs>
    <path d="M586 739h18v16h-18z" fill="#222"/><path d="M592 733h18v16h-18z" fill="#fafafa" stroke="#d4d4d4" stroke-width=".6"/><path d="M592 739h12v10h-12z" fill="#8f9090"/>
    <circle cx="642" cy="744" r="12" fill="#1271c4"/><path d="M630 743c1-14 24-15 24 0 0 5-6 6-9 4 2-3 0-7-4-7-5 0-10 2-11 3z" fill="url(#eg)"/><path d="M638 744c0 6 6 10 15 7-4 7-14 6-18 1-3-4-1-9 3-8z" fill="#0c4f98"/><path d="M643 743c-2 2-1 5 3 6l8-2-1 4c-3 1-8 1-10-1-3-3-3-6 0-7z" fill="#eee"/>
    <path d="M680 733h9c3 0 4 2 5 6h-5l-6 12h-5c-3 0-4-3-3-6l2-7c1-3 1-5 3-5z" fill="url(#cl)"/><path d="M692 756h-9c-3 0-4-2-5-6h5l6-12h5c3 0 4 3 3 6l-2 7c-1 3-1 5-3 5z" fill="url(#cr)"/><path d="M689 733c3 0 4 2 5 6h-5l-2 2-2-6z" fill="#1e56c8"/><path d="M685 741h4l-3 8h-4z" fill="#eee"/>
    <path d="M718 733h9l3 3h12v19h-24z" fill="#e0a010"/><path d="M718 737h24v18h-24z" fill="url(#fd)"/><path d="M722 755v-4q0-3 3-3h9q3 0 3 3v4z" fill="#1577c8"/><rect x="727" y="760.500" width="6" height="2.500" rx="1.200" fill="#8a8a8a"/>
    <path d="M767 738v-4.500h12V738" fill="none" stroke="#3cc3ee" stroke-width="2"/><rect x="762" y="737" width="23" height="19" rx="2.500" fill="url(#st)"/><path d="M769 742h4v4h-4z" fill="#f25022"/><path d="M774 742h4v4h-4z" fill="#7fba00"/><path d="M769 747h4v4h-4z" fill="#00a4ef"/><path d="M774 747h4v4h-4z" fill="#ffb900"/>
    <circle cx="818" cy="744" r="11" fill="#0b96d6"/><path d="M811 752l-2 4 7-2z" fill="#0b96d6"/><text x="818" y="751" text-anchor="middle" font-family="Open Sans" font-weight="800" font-size="18" fill="#fff">?</text><circle cx="827" cy="735" r="7.500" fill="#fdc111"/>
    <circle cx="862" cy="744" r="11.500" fill="#0a35c8"/><text x="861.500" y="749" text-anchor="middle" font-family="Open Sans" font-weight="600" font-style="italic" font-size="15.500" textLength="16" lengthAdjust="spacingAndGlyphs" fill="#fff">hp</text>
    <circle cx="906" cy="744" r="12" fill="#fbc116"/><path d="M895.600 738a12 12 0 0 1 20.800 0H906a6 6 0 0 0-5.200 9z" fill="#e33b2e"/><path d="M895.600 738l5.200 9a6 6 0 0 0 7 2.700l-3.800 6.200a12 12 0 0 1-8.400-17.900z" fill="#2da44e"/><circle cx="906" cy="744" r="6" fill="#fff"/><circle cx="906" cy="744" r="4.700" fill="#3f7ff0"/>
    <rect x="930" y="724" width="40" height="40" rx="4" fill="#eaaeaa"/><rect x="938" y="732" width="18" height="17" rx="2" fill="#fafafa"/><path d="M941.500 746v-11.500h10v9.500M941 745.500h5" fill="none" stroke="#d8391f" stroke-width="2.200" stroke-dasharray="3 1"/><path d="M953.500 736v10c0 3-1 4-2 5M945 747.500h10l5-2" fill="none" stroke="#8a8e96" stroke-width="2"/><circle cx="960" cy="747" r="2.500" fill="none" stroke="#2b9be0" stroke-width="1.500"/><circle cx="951" cy="754" r="2.500" fill="none" stroke="#2b9be0" stroke-width="1.500"/><rect x="934" y="760" width="32" height="3" rx="1.500" fill="#c42b1c"/>
    <path d="M1000 732l6 3v18l-6 3-14-13-3-2 3-3z" fill="#2f9ee8"/><path d="M982 738l2-1.500 16 13V756L983 741z" fill="#1272b8"/><path d="M1000 739v10l-7-5z" fill="#eee"/><path d="M982 750l2 2 7-6-3-3z" fill="#1b86d0"/><path d="M985 744l2-1.500 5 1.500-6 5z" fill="#1b86d0"/><path d="M982 742h3v4h-3z" fill="#eee"/><rect x="991" y="760.500" width="6" height="2.500" rx="1.200" fill="#8a8a8a"/>
    <rect x="1021" y="724.500" width="35" height="39" rx="4" fill="#f6f6f6" stroke="#dcdcdc"/><rect x="1018.500" y="724.500" width="34" height="39" rx="4" fill="#fafafa" stroke="#e2e2e2"/><path d="M1027 732h19l3 2v22h-22z" fill="#b30b3c"/><path d="M1029 732h17v17h-17z" fill="#e51050"/><path d="M1029 749h19v7h-19z" fill="#7a0829"/><text x="1038" y="746" text-anchor="middle" font-family="Open Sans" font-weight="800" font-size="13" fill="#fff">A</text><text x="1038.500" y="754.500" text-anchor="middle" font-family="Open Sans" font-weight="700" font-size="5" fill="#fff">CAD</text><rect x="1030" y="760" width="16" height="3" rx="1.500" fill="#a94fc0"/>
  </svg>
  <svg class="w-[30px] h-[46px]" viewBox="1130 721 30 46"><path d="M1131 747l5-5 5 5" fill="none" stroke="#222" stroke-width="1.400"/></svg>
  <div class="w-[28px] pt-[8px] text-center leading-4">ENG<br>IN</div>
  <svg class="w-[92px] h-[46px]" viewBox="1188 721 92 46" fill="none" stroke="#222" stroke-width="1.300"><path d="M1205 742c4-5 11-5 15 0M1207.500 744.500c3-3 7-3 10 0M1210 747c1.500-1.500 3.500-1.500 5 0"/><circle cx="1212.500" cy="748.500" r="1" fill="#222"/><path d="M1228.500 742h2l4-3.500v11l-4-3.500h-2zM1236.500 741.500c1.500 1.500 1.500 3.500 0 5"/><path d="M1238.500 739.500c3 2.500 3 6.500 0 9" stroke="#555"/><path d="M1240.500 738c4 3 4 9 0 12" stroke="#aaa"/><path d="M1260 740.500h6v8h-10M1267.500 742.500v4"/><path d="M1254 741c0-2 2-3 4-3v5c-1 2-4 2-4-2zM1253 747l4-3" fill="#222"/></svg>
  <div class="w-[67px] pt-[7px] text-right leading-4 text-[11.650px]">19:04<br>13-10-2025</div>
</footer>
</body>
</html>
